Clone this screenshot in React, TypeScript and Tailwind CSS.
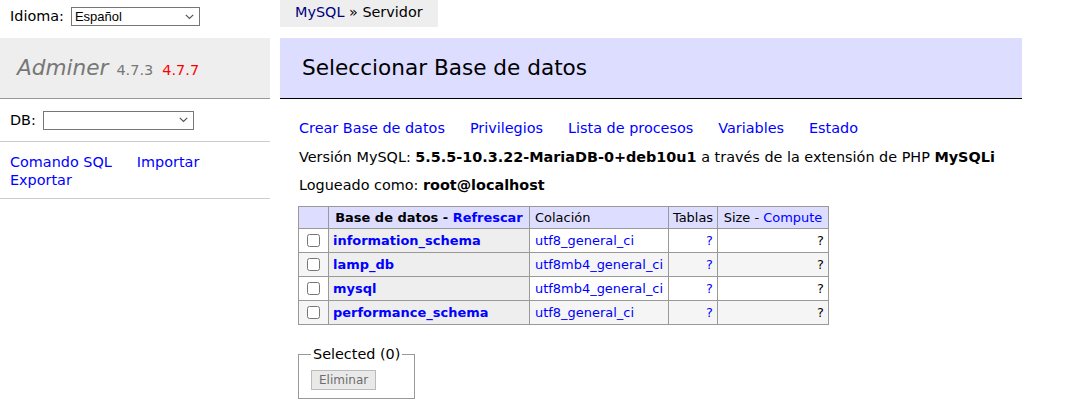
import React from "react";

type Db = { name: string; collation: string };

const databases: Db[] = [
  { name: "information_schema", collation: "utf8_general_ci" },
  { name: "lamp_db", collation: "utf8mb4_general_ci" },
  { name: "mysql", collation: "utf8mb4_general_ci" },
  { name: "performance_schema", collation: "utf8_general_ci" },
];

const FakeSelect = ({ value, className }: { value?: string; className: string }) => (
  <div
    className={`flex h-[19px] items-center justify-between border border-[#767676] bg-white pl-[3px] pr-[5px] font-['Liberation_Sans',Arial,sans-serif] text-[13px] leading-[17px] ${className}`}
  >
    <span>{value}</span>
    <svg width="9" height="6" viewBox="0 0 9 6" fill="none">
      <polyline points="0.8,0.8 4.5,4.5 8.2,0.8" stroke="#555" strokeWidth="1.2" />
    </svg>
  </div>
);

const Sidebar = () => (
  <aside className="w-[270px] shrink-0">
    {/* Language */}
    <div className="flex h-[38px] items-start gap-[7px] px-[10px] pt-[7px]">
      <span className="leading-[19px]">Idioma:</span>
      <FakeSelect value="Español" className="w-[129px]" />
    </div>

    {/* Logo */}
    <h1 className="h-[61px] border-b border-[#999] bg-[#eee] pl-[17px] pt-[16px] leading-[27px] font-normal text-[#777]">
      <span className="text-[21.6px] italic">Adminer</span>
      <span className="ml-[8px] text-[14.5px]">4.7.3</span>
      <span className="ml-[9px] text-[14.5px] text-[#f00]">4.7.7</span>
    </h1>

    {/* DB */}
    <div className="flex h-[43px] items-center gap-[7px] border-b border-[#ccc] px-[10px]">
      <span>DB:</span>
      <FakeSelect className="w-[151px]" />
    </div>

    {/* Links */}
    <div className="h-[57px] border-b border-[#ccc] px-[10px] pt-[11px]">
      <div className="flex gap-[25px]">
        <a className="text-[#00f]">Comando SQL</a>
        <a className="text-[#00f]">Importar</a>
      </div>
      <a className="block text-[#00f]">Exportar</a>
    </div>
  </aside>
);

const Main = () => (
  <main className="ml-[10px] w-[742px]">
    {/* Breadcrumb */}
    <div className="flex h-[38px] items-start">
      <div className="h-[27px] whitespace-nowrap bg-[#eee] px-[15px] leading-[25px]">
        <a className="text-[#000080]">MySQL</a> » Servidor
      </div>
    </div>

    <h2 className="h-[61px] border-b border-black bg-[#ddf] pl-[22px] pt-[16px] text-[21.6px] leading-[27px] font-normal">
      Seleccionar Base de datos
    </h2>

    <div className="pl-[18px]">
      <p className="mt-[20px] flex gap-[25px] pl-[1px] text-[#00f]">
        <a>Crear Base de datos</a>
        <a>Privilegios</a>
        <a>Lista de procesos</a>
        <a>Variables</a>
        <a>Estado</a>
      </p>
      <p className="mt-[11px] whitespace-nowrap pl-[1px]">
        Versión MySQL: <b>5.5.5-10.3.22-MariaDB-0+deb10u1</b> a través de la extensión de PHP{" "}
        <b>MySQLi</b>
      </p>
      <p className="mt-[10px] pl-[1px]">
        Logueado como: <b>root@localhost</b>
      </p>

      <table className="mt-[12px] border-separate border-spacing-0 border-t border-l border-[#999] text-[12.96px] leading-[16px]">
        <thead>
          <tr className="bg-[#ddf]">
            <td className="border-r border-b border-[#999] p-0">
              <div className="h-[21px] w-[29px]" />
            </td>
            <th className="border-r border-b border-[#999] p-0 font-bold">
              <div className="flex h-[21px] w-[200px] items-center justify-center whitespace-nowrap">
                Base de datos -&nbsp;<a className="text-[#00f]">Refrescar</a>
              </div>
            </th>
            <td className="border-r border-b border-[#999] p-0">
              <div className="flex h-[21px] w-[138px] items-center px-[5px]">Colación</div>
            </td>
            <td className="border-r border-b border-[#999] p-0">
              <div className="flex h-[21px] w-[48px] items-center justify-center">Tablas</div>
            </td>
            <td className="border-r border-b border-[#999] p-0">
              <div className="flex h-[21px] w-[110px] items-center justify-center whitespace-nowrap">
                Size -&nbsp;<a className="text-[#00f]">Compute</a>
              </div>
            </td>
          </tr>
        </thead>
        <tbody>
          {databases.map((db, i) => {
            const odd = i % 2 === 1;
            const bg = odd ? "bg-[#f5f5f5]" : "bg-white";
            return (
              <tr key={db.name}>
                <td className={`border-r border-b border-[#999] p-0 ${bg}`}>
                  <div className="flex h-[23px] w-[29px] items-center justify-center">
                    <input type="checkbox" className="m-0 h-[13px] w-[13px]" />
                  </div>
                </td>
                <th className="border-r border-b border-[#999] bg-[#eee] p-0 text-left font-bold">
                  <div className="flex h-[23px] w-[200px] items-center px-[4px]">
                    <a className="text-[#00f]">{db.name}</a>
                  </div>
                </th>
                <td className={`border-r border-b border-[#999] p-0 ${bg}`}>
                  <div className="flex h-[23px] w-[138px] items-center px-[5px] whitespace-nowrap">
                    <a className="text-[#00f]">{db.collation}</a>
                  </div>
                </td>
                <td className={`border-r border-b border-[#999] p-0 ${bg}`}>
                  <div className="flex h-[23px] w-[48px] items-center justify-end px-[4px]">
                    <a className="text-[#00f]">?</a>
                  </div>
                </td>
                <td className={`border-r border-b border-[#999] p-0 ${bg}`}>
                  <div className="flex h-[23px] w-[110px] items-center justify-end px-[4px]">?</div>
                </td>
              </tr>
            );
          })}
        </tbody>
      </table>

      <fieldset className="mt-[20px] w-fit border border-[#999] px-[12px] pb-[8px]">
        <legend className="px-[2px] leading-[18px]">Selected (0)</legend>
        <button
          disabled
          className="mt-[7px] h-[20px] border border-[#bbb] bg-[#e9e9e9] px-[7px] text-[12px] leading-[18px] text-[#6d6d6d]"
        >
          Eliminar
        </button>
      </fieldset>
    </div>
  </main>
);

export default function App() {
  return (
    <div className="flex min-h-[418px] bg-white font-['DejaVu_Sans',Verdana,sans-serif] text-[14.4px] leading-[18px] text-black">
      <Sidebar />
      <Main />
    </div>
  );
}
